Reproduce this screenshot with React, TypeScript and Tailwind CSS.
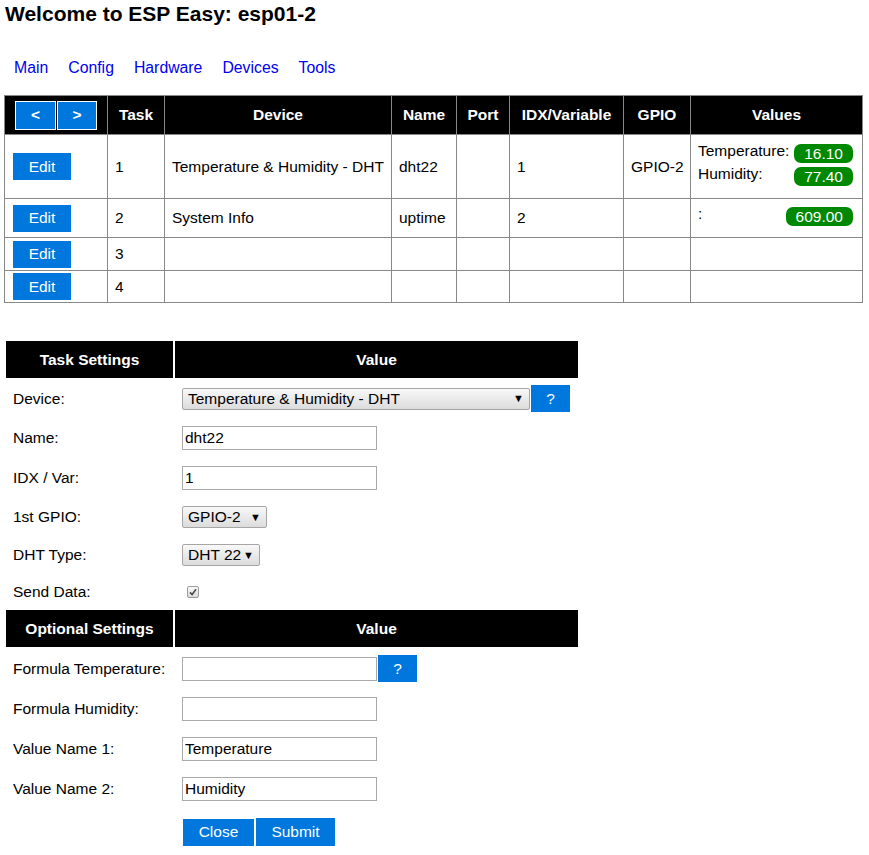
import React from "react";

const tasks = [
  {
    n: 1,
    device: "Temperature & Humidity - DHT",
    name: "dht22",
    idx: "1",
    gpio: "GPIO-2",
    values: [
      ["Temperature:", "16.10"],
      ["Humidity:", "77.40"],
    ],
    h: "h-[64px]",
  },
  { n: 2, device: "System Info", name: "uptime", idx: "2", gpio: "", values: [[":", "609.00"]], h: "h-[39px]" },
  { n: 3, device: "", name: "", idx: "", gpio: "", values: [], h: "h-[33px]" },
  { n: 4, device: "", name: "", idx: "", gpio: "", values: [], h: "h-[32px]" },
];

function BlueButton({ label, w, h }: { label: string; w: string; h: string }) {
  return (
    <span className={`${w} ${h} inline-flex items-center justify-center bg-[#0077dd] text-white`}>{label}</span>
  );
}

function FakeSelect({ value, w }: { value: string; w: string }) {
  return (
    <div
      className={`${w} h-[22px] flex items-center justify-between pl-[5px] pr-[5px] border border-[#a6a6a6] rounded-[2px] bg-linear-to-b from-[#f8f8f8] to-[#dcdcdc] leading-none`}
    >
      <span>{value}</span>
      <span className="text-[11px] text-black">▼</span>
    </div>
  );
}

function TextInput({ value }: { value: string }) {
  return (
    <input
      readOnly
      value={value}
      className="w-[195px] h-[24px] border border-[#a9a9a9] px-[2px] text-[15.5px] bg-white outline-none"
    />
  );
}

export default function App() {
  const td = "border border-[#888] px-[7px] whitespace-nowrap";
  const th = "border border-[#888] bg-black text-white font-bold text-center";
  const label = "pl-[7px] whitespace-nowrap";
  const val = "pl-[7px]";
  return (
    <div className="min-h-[855px] bg-white px-[4px] text-[15.5px] text-black font-['Liberation_Sans',Arial,sans-serif]">
      <h1 className="pt-[2px] pl-[1px] text-[21px] leading-[24px] font-bold">Welcome to ESP Easy: esp01-2</h1>

      <nav className="mt-[33px] flex text-[15.8px] leading-[18px]">
        {["Main", "Config", "Hardware", "Devices", "Tools"].map((l) => (
          <a key={l} href="#" className="px-[10px] text-[#0000ee]">
            {l}
          </a>
        ))}
      </nav>

      <table className="mt-[18px] w-[859px] table-fixed border-collapse">
        <colgroup>
          <col className="w-[103px]" />
          <col className="w-[57px]" />
          <col className="w-[227px]" />
          <col className="w-[65px]" />
          <col className="w-[53px]" />
          <col className="w-[114px]" />
          <col className="w-[67px]" />
          <col className="w-[172px]" />
        </colgroup>
        <thead>
          <tr className="h-[39px]">
            <th className={`${th} pl-[10px]`}>
              <div className="flex gap-[1px]">
                <span className="w-[41px] h-[29px] flex items-center justify-center bg-[#0077dd] border border-white">&lt;</span>
                <span className="w-[40px] h-[29px] flex items-center justify-center bg-[#0077dd] border border-white">&gt;</span>
              </div>
            </th>
            <th className={th}>Task</th>
            <th className={th}>Device</th>
            <th className={th}>Name</th>
            <th className={th}>Port</th>
            <th className={th}>IDX/Variable</th>
            <th className={th}>GPIO</th>
            <th className={th}>Values</th>
          </tr>
        </thead>
        <tbody>
          {tasks.map((t) => (
            <tr key={t.n} className={t.h}>
              <td className={`${td} pl-[8px]`}>
                <BlueButton label="Edit" w="w-[58px]" h="h-[27px]" />
              </td>
              <td className={td}>{t.n}</td>
              <td className={td}>{t.device}</td>
              <td className={td}>{t.name}</td>
              <td className={td}></td>
              <td className={td}>{t.idx}</td>
              <td className={`${td} overflow-visible`}>{t.gpio}</td>
              <td className={`${td} pr-[7px]`}>
                <div className="pb-[3px]">
                  {t.values.map(([k, v]) => (
                    <div key={k} className="flex items-start justify-between">
                      <span className="leading-[18px]">{k}</span>
                      <span className="m-[2px] rounded-[7px] bg-[#008800] px-[10px] py-[1px] leading-[17px] text-white">{v}</span>
                    </div>
                  ))}
                </div>
              </td>
            </tr>
          ))}
        </tbody>
      </table>

      <table className="mt-[36px] w-[576px] table-fixed border-separate border-spacing-[2px]">
        <tbody>
          <tr className="h-[37px]">
            <th className="w-[167px] bg-black text-white font-bold text-center">Task Settings</th>
            <th className="w-[403px] bg-black text-white font-bold text-center">Value</th>
          </tr>
          <tr className="h-[37px]">
            <td className={label}>Device:</td>
            <td className={val}>
              <div className="flex items-center gap-[1px]">
                <FakeSelect value="Temperature & Humidity - DHT" w="w-[348px]" />
                <BlueButton label="?" w="w-[39px]" h="h-[27px]" />
              </div>
            </td>
          </tr>
          <tr className="h-[38px]">
            <td className={label}>Name:</td>
            <td className={val}>
              <TextInput value="dht22" />
            </td>
          </tr>
          <tr className="h-[38px]">
            <td className={label}>IDX / Var:</td>
            <td className={val}>
              <TextInput value="1" />
            </td>
          </tr>
          <tr className="h-[36px]">
            <td className={label}>1st GPIO:</td>
            <td className={val}>
              <FakeSelect value="GPIO-2" w="w-[85px]" />
            </td>
          </tr>
          <tr className="h-[36px]">
            <td className={label}>DHT Type:</td>
            <td className={val}>
              <FakeSelect value="DHT 22" w="w-[78px]" />
            </td>
          </tr>
          <tr className="h-[33px]">
            <td className={label}>Send Data:</td>
            <td className={val}>
              <span className="ml-[5px] flex w-[12px] h-[12px] items-center justify-center rounded-[2px] border border-[#9a9a9a] bg-linear-to-b from-[#fafafa] to-[#dcdcdc]">
                <svg viewBox="0 0 10 10" className="w-[8px] h-[8px]">
                  <path d="M1.2 5.4 L3.9 8.2 L8.8 1.6" stroke="#4a4a4a" strokeWidth="2" fill="none" />
                </svg>
              </span>
            </td>
          </tr>
          <tr className="h-[37px]">
            <th className="bg-black text-white font-bold text-center">Optional Settings</th>
            <th className="bg-black text-white font-bold text-center">Value</th>
          </tr>
          <tr className="h-[39px]">
            <td className={label}>Formula Temperature:</td>
            <td className={val}>
              <div className="flex items-center gap-[1px]">
                <TextInput value="" />
                <BlueButton label="?" w="w-[39px]" h="h-[27px]" />
              </div>
            </td>
          </tr>
          <tr className="h-[38px]">
            <td className={label}>Formula Humidity:</td>
            <td className={val}>
              <TextInput value="" />
            </td>
          </tr>
          <tr className="h-[38px]">
            <td className={label}>Value Name 1:</td>
            <td className={val}>
              <TextInput value="Temperature" />
            </td>
          </tr>
          <tr className="h-[38px]">
            <td className={label}>Value Name 2:</td>
            <td className={val}>
              <TextInput value="Humidity" />
            </td>
          </tr>
          <tr className="h-[44px]">
            <td></td>
            <td className={val}>
              <div className="flex items-center">
                <span className="ml-[1px]">
                  <BlueButton label="Close" w="w-[71px]" h="h-[27px]" />
                </span>
                <span className="ml-[2px]">
                  <BlueButton label="Submit" w="w-[79px]" h="h-[28px]" />
                </span>
              </div>
            </td>
          </tr>
        </tbody>
      </table>
    </div>
  );
}
